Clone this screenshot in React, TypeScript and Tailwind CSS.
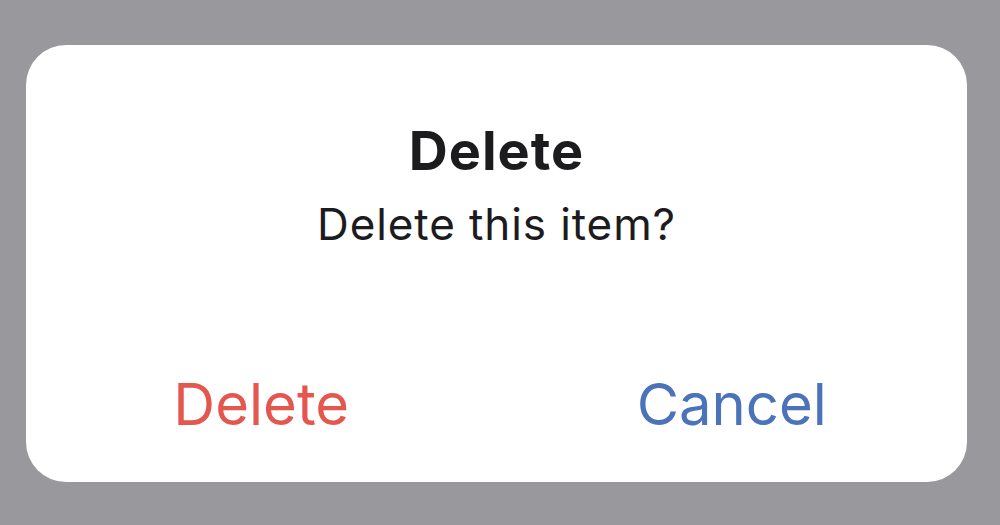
export default function App() {
  return (
    <div className="h-[525px] w-[1000px] bg-[#99989d] pl-[26px] pt-[45px] font-['Inter',sans-serif]">
      <div className="flex h-[437px] w-[941px] flex-col items-center rounded-[40px] bg-white">
        <h1 className="mt-[79px] text-[54px] font-bold leading-none tracking-[1px] text-[#1c1c1e]">Delete</h1>
        <p className="mt-[24px] text-[44px] leading-none tracking-[0.9px] text-[#1c1c1e]">Delete this item?</p>
        <div className="mt-[129px] grid w-full grid-cols-2">
          <button className="text-center text-[58px] leading-none text-[#e4574f]">Delete</button>
          <button className="text-center text-[58px] leading-none text-[#4a73b9]">Cancel</button>
        </div>
      </div>
    </div>
  );
}
